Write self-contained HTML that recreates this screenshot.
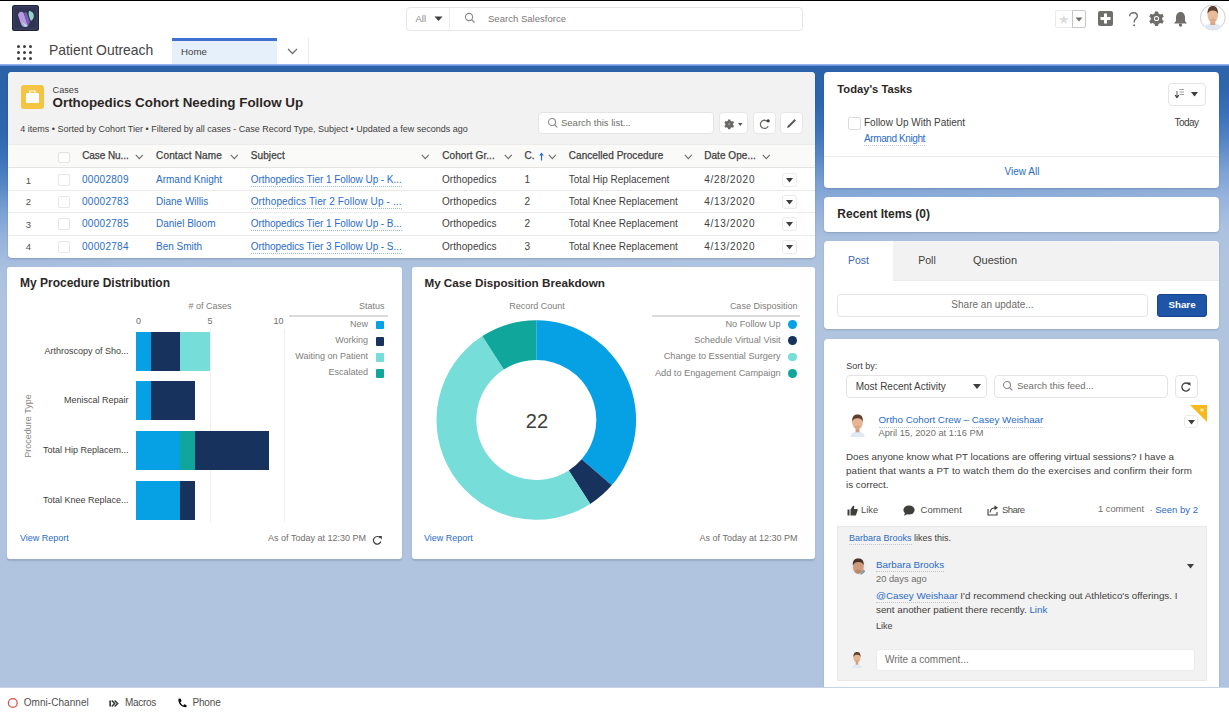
<!DOCTYPE html>
<html><head><meta charset="utf-8"><title>Salesforce</title>
<style>
*{box-sizing:border-box;margin:0;padding:0}
html,body{width:1229px;height:715px;overflow:hidden}
body{position:relative;font-family:"Liberation Sans",sans-serif;background:#b0c4df;color:#3e3e3c}
.a{position:absolute}
.t{position:absolute;white-space:nowrap}
svg.a{overflow:visible}
</style></head><body>
<div class="a" style="left:0px;top:65px;width:1229px;height:622px;background:linear-gradient(178deg,#2b62a8 21px,#2e66ad 66px,#3a70b8 91px,#5284c4 116px,#7aa0d3 146px,#98b4dc 176px,#abc1df 206px,#b0c4df 236px,#b0c4df 100%);"></div>
<div class="a" style="left:0px;top:0px;width:1229px;height:37px;background:#fff;"></div>
<div class="a" style="left:0px;top:0px;width:1229px;height:1px;background:#000;"></div>
<div class="a" style="left:0px;top:36.5px;width:1229px;height:1px;background:#f0efee;"></div>
<svg class="a" style="left:12px;top:5px;" width="27" height="26" viewBox="0 0 27 26"><rect x="0" y="0" width="27" height="26" rx="2.5" fill="#1f2339"/><rect x="1.8" y="1.8" width="23.4" height="22.4" rx="1" fill="#2f3453" stroke="#4b5276" stroke-width="0.8"/><path d="M6 10 C7 6 11 6 12 9 L16 21 C13 23 10 22 9 19 Z" fill="#b79be0"/><path d="M10 17 L16 21 L13 22 Z" fill="#a8e0e0"/><path d="M12 8 C14 7 15 8 15 9 L18 17 L16 21 Z" fill="#7d5cb8"/><path d="M17 6 C21 6 23 10 21 14 L19 16 C17 12 16 9 17 6 Z" fill="#8fd8c8"/></svg>
<div class="a" style="left:406px;top:7px;width:397px;height:23.5px;border:1px solid #e8e7e6;border-radius:4px;background:#fff;"></div>
<div class="a" style="left:449px;top:8px;width:1px;height:21px;background:#ecebea;"></div>
<div class="t" id="t0" style="left:415.5px;top:13.96px;font-size:9.5px;line-height:9.5px;color:#8a8886;font-weight:400;">All</div>
<svg class="a" style="left:434px;top:16px;" width="9" height="6" viewBox="0 0 9 6"><path d="M0.5 0.5 L8.5 0.5 L4.5 5 Z" fill="#3e3e3c"/></svg>
<svg class="a" style="left:464px;top:12px;" width="12" height="12" viewBox="0 0 12 12"><circle cx="5" cy="5" r="3.6" fill="none" stroke="#8a8886" stroke-width="1.1"/><path d="M7.6 7.6 L10.5 10.5" stroke="#8a8886" stroke-width="1.2"/></svg>
<div class="t" id="t1" style="left:488px;top:13.96px;font-size:9.5px;line-height:9.5px;color:#7a7876;font-weight:400;letter-spacing:0.022px;">Search Salesforce</div>
<div class="a" style="left:1055px;top:10px;width:18px;height:18px;border:1px solid #ecebea;border-radius:2px 0 0 2px;background:#fff;"></div>
<div class="t" id="t2" style="left:1064px;transform:translateX(-50%);top:13.00px;font-size:13px;line-height:13px;color:#dddbda;font-weight:400;">&#9733;</div>
<div class="a" style="left:1072px;top:10px;width:14px;height:18px;border:1px solid #c9c7c5;border-radius:0 2px 2px 0;background:#fff;"></div>
<svg class="a" style="left:1075px;top:17px;" width="8" height="5" viewBox="0 0 8 5"><path d="M0.5 0.5 L7.5 0.5 L4 4.5 Z" fill="#706e6b"/></svg>
<svg class="a" style="left:1098px;top:11px;" width="15" height="15" viewBox="0 0 15 15"><rect x="0" y="0" width="15" height="15" rx="2" fill="#706e6b"/><rect x="6" y="2.5" width="3" height="10" fill="#fff"/><rect x="2.5" y="6" width="10" height="3" fill="#fff"/></svg>
<svg class="a" style="left:1128px;top:12px;" width="11" height="15" viewBox="0 0 11 15"><path d="M1.6 4.2 C1.6 2 3.4 0.8 5.4 0.8 C7.6 0.8 9.3 2.2 9.3 4.2 C9.3 6.6 6.2 7 6.2 9.6 V10.6" fill="none" stroke="#706e6b" stroke-width="1.4"/><circle cx="6.2" cy="13.2" r="1" fill="#706e6b"/></svg>
<svg class="a" style="left:1149px;top:11px;" width="15" height="15" viewBox="0 0 15 15"><g transform="translate(7.5 7.5)"><path d="M-1.5 -7 h3 l0.5 2 l1.8 1 l2 -0.7 l1.5 2.6 l-1.6 1.4 v2 l1.6 1.4 l-1.5 2.6 l-2 -0.7 l-1.8 1 l-0.5 2 h-3 l-0.5 -2 l-1.8 -1 l-2 0.7 l-1.5 -2.6 l1.6 -1.4 v-2 l-1.6 -1.4 l1.5 -2.6 l2 0.7 l1.8 -1 Z" fill="#706e6b"/><circle r="2.6" fill="#fff"/><circle r="1.6" fill="#706e6b"/></g></svg>
<svg class="a" style="left:1173px;top:11px;" width="15" height="16" viewBox="0 0 15 16"><path d="M7.5 1 C10.5 1 12 3.5 12 6.5 L12 10 L14 12.5 L1 12.5 L3 10 L3 6.5 C3 3.5 4.5 1 7.5 1 Z" fill="#706e6b"/><circle cx="7.5" cy="14" r="1.7" fill="#706e6b"/></svg>
<svg class="a" style="left:1199px;top:4px;" width="27" height="27" viewBox="0 0 27 27"><defs><clipPath id="av"><circle cx="13.8" cy="13.5" r="12.3"/></clipPath></defs><circle cx="13.8" cy="13.5" r="12.4" fill="#fdfdfd" stroke="#cfcfcf" stroke-width="1"/><g clip-path="url(#av)"><path d="M3 28 C4 21 8 20 13.8 20 C19.5 20 23.5 21 24.5 28 Z" fill="#dfe8f2"/><rect x="11.3" y="16" width="5" height="5" fill="#d9a488"/><ellipse cx="13.8" cy="11.5" rx="5.2" ry="7" fill="#e9bb98"/><path d="M8.6 10 C8.2 4.5 10.8 2 13.8 2 C17 2 19.4 4.5 19 10 C18 7.5 16 6.5 13.8 6.6 C11.5 6.6 9.6 7.5 8.6 10 Z" fill="#5e3f2c"/><ellipse cx="13.8" cy="16" rx="3" ry="1.5" fill="#cf9a7c" opacity=".5"/></g></svg>
<div class="a" style="left:0px;top:37px;width:1229px;height:27px;background:#fff;"></div>
<div class="a" style="left:16.5px;top:44.5px;width:3.4px;height:3.4px;background:#3e3e3c;border-radius:50%;"></div>
<div class="a" style="left:16.5px;top:50.5px;width:3.4px;height:3.4px;background:#3e3e3c;border-radius:50%;"></div>
<div class="a" style="left:16.5px;top:56.5px;width:3.4px;height:3.4px;background:#3e3e3c;border-radius:50%;"></div>
<div class="a" style="left:22.5px;top:44.5px;width:3.4px;height:3.4px;background:#3e3e3c;border-radius:50%;"></div>
<div class="a" style="left:22.5px;top:50.5px;width:3.4px;height:3.4px;background:#3e3e3c;border-radius:50%;"></div>
<div class="a" style="left:22.5px;top:56.5px;width:3.4px;height:3.4px;background:#3e3e3c;border-radius:50%;"></div>
<div class="a" style="left:28.5px;top:44.5px;width:3.4px;height:3.4px;background:#3e3e3c;border-radius:50%;"></div>
<div class="a" style="left:28.5px;top:50.5px;width:3.4px;height:3.4px;background:#3e3e3c;border-radius:50%;"></div>
<div class="a" style="left:28.5px;top:56.5px;width:3.4px;height:3.4px;background:#3e3e3c;border-radius:50%;"></div>
<div class="t" id="t3" style="left:49px;top:43.53px;font-size:13.9px;line-height:13.9px;color:#444;font-weight:400;">Patient Outreach</div>
<div class="a" style="left:171.5px;top:38px;width:105.5px;height:26px;background:#e6f0fb;"></div>
<div class="a" style="left:171.5px;top:38px;width:105.5px;height:2.5px;background:#3f6fcf;"></div>
<div class="t" id="t4" style="left:181px;top:46.79px;font-size:9.7px;line-height:9.7px;color:#3e3e3c;font-weight:400;">Home</div>
<svg class="a" style="left:287px;top:48px;" width="11" height="7" viewBox="0 0 11 7"><path d="M1 1 L5.5 5.5 L10 1" fill="none" stroke="#706e6b" stroke-width="1.3"/></svg>
<div class="a" style="left:308px;top:38px;width:1px;height:26px;background:#ecebea;"></div>
<div class="a" style="left:0px;top:63.6px;width:1229px;height:2px;background:linear-gradient(to bottom,#a9c2f6,#5282d6);"></div>
<div class="a" style="left:7.5px;top:72px;width:807.5px;height:186px;background:#fff;border-radius:4px;box-shadow:0 1px 2px rgba(0,0,0,.18);overflow:hidden;"></div>
<div class="a" style="left:7.5px;top:72px;width:807.5px;height:72px;background:#f3f2f2;border-radius:4px 4px 0 0;"></div>
<svg class="a" style="left:21px;top:85px;" width="23" height="24" viewBox="0 0 23 24"><rect width="23" height="24" rx="3" fill="#f4c542"/><rect x="5" y="8" width="13" height="10" rx="1" fill="#fff"/><path d="M9 8 V6 H14 V8" fill="none" stroke="#fff" stroke-width="1.2"/></svg>
<div class="t" id="t5" style="left:52.5px;top:85.61px;font-size:9.2px;line-height:9.2px;color:#3e3e3c;font-weight:400;">Cases</div>
<div class="t" id="t6" style="left:52.5px;top:95.96px;font-size:13.4px;line-height:13.4px;color:#2b2826;font-weight:700;">Orthopedics Cohort Needing Follow Up</div>
<div class="t" id="t7" style="left:20.3px;top:124.58px;font-size:9px;line-height:9px;color:#3e3e3c;font-weight:400;">4 items • Sorted by Cohort Tier • Filtered by all cases - Case Record Type, Subject • Updated a few seconds ago</div>
<div class="a" style="left:538px;top:112px;width:176px;height:22px;background:#fff;border:1px solid #e5e4e3;border-radius:4px;"></div>
<svg class="a" style="left:547px;top:117px;" width="12" height="12" viewBox="0 0 12 12"><circle cx="5" cy="5" r="3.5" fill="none" stroke="#8a8886" stroke-width="1.1"/><path d="M7.6 7.6 L10.3 10.3" stroke="#8a8886" stroke-width="1.2"/></svg>
<div class="t" id="t8" style="left:561px;top:118.26px;font-size:9.5px;line-height:9.5px;color:#706e6b;font-weight:400;">Search this list...</div>
<div class="a" style="left:718.5px;top:112px;width:29.5px;height:21.5px;background:#fff;border:1px solid #e8e7e6;border-radius:4px;"></div>
<svg class="a" style="left:723.5px;top:118.5px;" width="11" height="11" viewBox="0 0 11 11"><g transform="translate(5.2 5.2) scale(0.85)"><path d="M-1.2 -5.5 h2.4 l0.4 1.5 l1.4 .8 l1.5 -.5 l1.2 2 l-1.2 1.1 v1.6 l1.2 1.1 l-1.2 2 l-1.5 -.5 l-1.4 .8 l-.4 1.5 h-2.4 l-.4 -1.5 l-1.4 -.8 l-1.5 .5 l-1.2 -2 l1.2 -1.1 v-1.6 l-1.2 -1.1 l1.2 -2 l1.5 .5 l1.4 -.8 Z" fill="#6b6967"/><circle r="1.3" fill="#9a9896"/></g></svg>
<svg class="a" style="left:738px;top:122.5px;" width="4.5" height="3" viewBox="0 0 4.5 3"><path d="M0 0 L4.5 0 L2.25 3 Z" fill="#555"/></svg>
<div class="a" style="left:753px;top:112px;width:22.5px;height:21.5px;background:#fff;border:1px solid #e8e7e6;border-radius:4px;"></div>
<svg class="a" style="left:758.5px;top:117.5px;" width="12" height="11" viewBox="0 0 12 11"><path d="M8.6 3.6 A4.1 4.1 0 1 0 9.2 8.2" fill="none" stroke="#6b6967" stroke-width="1.3"/><circle cx="9.2" cy="2.8" r="1.6" fill="#3e3e3c"/></svg>
<div class="a" style="left:779.5px;top:112px;width:23.5px;height:21.5px;background:#fff;border:1px solid #e8e7e6;border-radius:4px;"></div>
<svg class="a" style="left:785.5px;top:117.5px;" width="11" height="11" viewBox="0 0 11 11"><path d="M1 9.8 L1.6 8 L8.6 1 L10 2.4 L3 9.4 Z" fill="#5a5856"/></svg>
<div class="a" style="left:7.5px;top:144px;width:807.5px;height:24px;background:#fafaf9;border-top:1px solid #ecebea;border-bottom:1px solid #e5e4e3;"></div>
<div class="a" style="left:58.2px;top:151.5px;width:12px;height:11.5px;background:#fff;border:1px solid #e3e2e1;border-radius:2px;"></div>
<div class="t" id="t9" style="left:82.2px;top:151.44px;font-size:10px;line-height:10px;color:#3e3e3c;font-weight:400;-webkit-text-stroke:0.25px #3e3e3c;letter-spacing:-0.075px;">Case Nu...</div>
<svg class="a" style="left:135.2px;top:154.4px;" width="9" height="6" viewBox="0 0 9 6"><path d="M0.8 0.8 L4.3 4.6 L7.8 0.8" fill="none" stroke="#706e6b" stroke-width="1.1"/></svg>
<div class="t" id="t10" style="left:156px;top:151.44px;font-size:10px;line-height:10px;color:#3e3e3c;font-weight:400;-webkit-text-stroke:0.25px #3e3e3c;letter-spacing:0.173px;">Contact Name</div>
<svg class="a" style="left:229.5px;top:154.4px;" width="9" height="6" viewBox="0 0 9 6"><path d="M0.8 0.8 L4.3 4.6 L7.8 0.8" fill="none" stroke="#706e6b" stroke-width="1.1"/></svg>
<div class="t" id="t11" style="left:250.7px;top:151.44px;font-size:10px;line-height:10px;color:#3e3e3c;font-weight:400;-webkit-text-stroke:0.25px #3e3e3c;letter-spacing:0.120px;">Subject</div>
<svg class="a" style="left:420.5px;top:154.4px;" width="9" height="6" viewBox="0 0 9 6"><path d="M0.8 0.8 L4.3 4.6 L7.8 0.8" fill="none" stroke="#706e6b" stroke-width="1.1"/></svg>
<div class="t" id="t12" style="left:442.3px;top:151.44px;font-size:10px;line-height:10px;color:#3e3e3c;font-weight:400;-webkit-text-stroke:0.25px #3e3e3c;letter-spacing:0.068px;">Cohort Gr...</div>
<svg class="a" style="left:503.5px;top:154.4px;" width="9" height="6" viewBox="0 0 9 6"><path d="M0.8 0.8 L4.3 4.6 L7.8 0.8" fill="none" stroke="#706e6b" stroke-width="1.1"/></svg>
<div class="t" id="t13" style="left:524.6px;top:151.44px;font-size:10px;line-height:10px;color:#3e3e3c;font-weight:400;-webkit-text-stroke:0.25px #3e3e3c;">C.</div>
<svg class="a" style="left:538.5px;top:151.5px;" width="5" height="9" viewBox="0 0 5 9"><path d="M2.5 0.5 L4.8 3.5 L3.1 3.5 L3.1 8.5 L1.9 8.5 L1.9 3.5 L0.2 3.5 Z" fill="#2a6cc8"/></svg>
<svg class="a" style="left:547.8px;top:154.4px;" width="9" height="6" viewBox="0 0 9 6"><path d="M0.8 0.8 L4.3 4.6 L7.8 0.8" fill="none" stroke="#706e6b" stroke-width="1.1"/></svg>
<div class="t" id="t14" style="left:568.8px;top:151.44px;font-size:10px;line-height:10px;color:#3e3e3c;font-weight:400;-webkit-text-stroke:0.25px #3e3e3c;letter-spacing:0.058px;">Cancelled Procedure</div>
<svg class="a" style="left:683.5px;top:154.4px;" width="9" height="6" viewBox="0 0 9 6"><path d="M0.8 0.8 L4.3 4.6 L7.8 0.8" fill="none" stroke="#706e6b" stroke-width="1.1"/></svg>
<div class="t" id="t15" style="left:704.2px;top:151.44px;font-size:10px;line-height:10px;color:#3e3e3c;font-weight:400;-webkit-text-stroke:0.25px #3e3e3c;letter-spacing:0.051px;">Date Ope...</div>
<svg class="a" style="left:761.8px;top:154.4px;" width="9" height="6" viewBox="0 0 9 6"><path d="M0.8 0.8 L4.3 4.6 L7.8 0.8" fill="none" stroke="#706e6b" stroke-width="1.1"/></svg>
<div class="t" id="t16" style="left:28.5px;transform:translateX(-50%);top:175.66px;font-size:9.5px;line-height:9.5px;color:#514f4d;font-weight:400;">1</div>
<div class="a" style="left:58.2px;top:174.0px;width:12px;height:12px;background:#fff;border:1px solid #e9e8e7;border-radius:2px;"></div>
<div class="t" id="t17" style="left:82px;top:175.23px;font-size:10px;line-height:10px;color:#2a6cc8;font-weight:400;letter-spacing:0.287px;">00002809</div>
<div class="t" id="t18" style="left:156px;top:175.23px;font-size:10px;line-height:10px;color:#2a6cc8;font-weight:400;">Armand Knight</div>
<div class="t" id="t19" style="left:250.7px;top:175.23px;font-size:10px;line-height:10px;color:#2a6cc8;font-weight:400;border-bottom:1px dotted #9bb8e6;padding-bottom:1px;letter-spacing:-0.053px;">Orthopedics Tier 1 Follow Up - K...</div>
<div class="t" id="t20" style="left:442px;top:175.23px;font-size:10px;line-height:10px;color:#3e3e3c;font-weight:400;letter-spacing:0.062px;">Orthopedics</div>
<div class="t" id="t21" style="left:524.6px;top:175.23px;font-size:10px;line-height:10px;color:#3e3e3c;font-weight:400;">1</div>
<div class="t" id="t22" style="left:568.8px;top:175.23px;font-size:10px;line-height:10px;color:#3e3e3c;font-weight:400;">Total Hip Replacement</div>
<div class="t" id="t23" style="left:704.2px;top:175.23px;font-size:10px;line-height:10px;color:#3e3e3c;font-weight:400;letter-spacing:0.722px;">4/28/2020</div>
<div class="a" style="left:782px;top:173.0px;width:15px;height:14px;background:#fff;border:1px solid #ecebea;border-radius:3px;"></div>
<svg class="a" style="left:786px;top:178.0px;" width="7" height="5" viewBox="0 0 7 5"><path d="M0 0 L7 0 L3.5 4.5 Z" fill="#3e3e3c"/></svg>
<div class="a" style="left:7.5px;top:189.8px;width:807.5px;height:1px;background:#ecebea;"></div>
<div class="t" id="t24" style="left:28.5px;transform:translateX(-50%);top:197.46px;font-size:9.5px;line-height:9.5px;color:#514f4d;font-weight:400;">2</div>
<div class="a" style="left:58.2px;top:195.8px;width:12px;height:12px;background:#fff;border:1px solid #e9e8e7;border-radius:2px;"></div>
<div class="t" id="t25" style="left:82px;top:197.03px;font-size:10px;line-height:10px;color:#2a6cc8;font-weight:400;letter-spacing:0.287px;">00002783</div>
<div class="t" id="t26" style="left:156px;top:197.03px;font-size:10px;line-height:10px;color:#2a6cc8;font-weight:400;">Diane Willis</div>
<div class="t" id="t27" style="left:250.7px;top:197.03px;font-size:10px;line-height:10px;color:#2a6cc8;font-weight:400;border-bottom:1px dotted #9bb8e6;padding-bottom:1px;letter-spacing:0.142px;">Orthopedics Tier 2 Follow Up - ...</div>
<div class="t" id="t28" style="left:442px;top:197.03px;font-size:10px;line-height:10px;color:#3e3e3c;font-weight:400;letter-spacing:0.062px;">Orthopedics</div>
<div class="t" id="t29" style="left:524.6px;top:197.03px;font-size:10px;line-height:10px;color:#3e3e3c;font-weight:400;">2</div>
<div class="t" id="t30" style="left:568.8px;top:197.03px;font-size:10px;line-height:10px;color:#3e3e3c;font-weight:400;">Total Knee Replacement</div>
<div class="t" id="t31" style="left:704.2px;top:197.03px;font-size:10px;line-height:10px;color:#3e3e3c;font-weight:400;letter-spacing:0.722px;">4/13/2020</div>
<div class="a" style="left:782px;top:194.8px;width:15px;height:14px;background:#fff;border:1px solid #ecebea;border-radius:3px;"></div>
<svg class="a" style="left:786px;top:199.8px;" width="7" height="5" viewBox="0 0 7 5"><path d="M0 0 L7 0 L3.5 4.5 Z" fill="#3e3e3c"/></svg>
<div class="a" style="left:7.5px;top:212.1px;width:807.5px;height:1px;background:#ecebea;"></div>
<div class="t" id="t32" style="left:28.5px;transform:translateX(-50%);top:219.76px;font-size:9.5px;line-height:9.5px;color:#514f4d;font-weight:400;">3</div>
<div class="a" style="left:58.2px;top:218.1px;width:12px;height:12px;background:#fff;border:1px solid #e9e8e7;border-radius:2px;"></div>
<div class="t" id="t33" style="left:82px;top:219.33px;font-size:10px;line-height:10px;color:#2a6cc8;font-weight:400;letter-spacing:0.287px;">00002785</div>
<div class="t" id="t34" style="left:156px;top:219.33px;font-size:10px;line-height:10px;color:#2a6cc8;font-weight:400;">Daniel Bloom</div>
<div class="t" id="t35" style="left:250.7px;top:219.33px;font-size:10px;line-height:10px;color:#2a6cc8;font-weight:400;border-bottom:1px dotted #9bb8e6;padding-bottom:1px;letter-spacing:-0.053px;">Orthopedics Tier 1 Follow Up - B...</div>
<div class="t" id="t36" style="left:442px;top:219.33px;font-size:10px;line-height:10px;color:#3e3e3c;font-weight:400;letter-spacing:0.062px;">Orthopedics</div>
<div class="t" id="t37" style="left:524.6px;top:219.33px;font-size:10px;line-height:10px;color:#3e3e3c;font-weight:400;">2</div>
<div class="t" id="t38" style="left:568.8px;top:219.33px;font-size:10px;line-height:10px;color:#3e3e3c;font-weight:400;">Total Knee Replacement</div>
<div class="t" id="t39" style="left:704.2px;top:219.33px;font-size:10px;line-height:10px;color:#3e3e3c;font-weight:400;letter-spacing:0.722px;">4/13/2020</div>
<div class="a" style="left:782px;top:217.1px;width:15px;height:14px;background:#fff;border:1px solid #ecebea;border-radius:3px;"></div>
<svg class="a" style="left:786px;top:222.1px;" width="7" height="5" viewBox="0 0 7 5"><path d="M0 0 L7 0 L3.5 4.5 Z" fill="#3e3e3c"/></svg>
<div class="a" style="left:7.5px;top:234.5px;width:807.5px;height:1px;background:#ecebea;"></div>
<div class="t" id="t40" style="left:28.5px;transform:translateX(-50%);top:242.16px;font-size:9.5px;line-height:9.5px;color:#514f4d;font-weight:400;">4</div>
<div class="a" style="left:58.2px;top:240.5px;width:12px;height:12px;background:#fff;border:1px solid #e9e8e7;border-radius:2px;"></div>
<div class="t" id="t41" style="left:82px;top:241.73px;font-size:10px;line-height:10px;color:#2a6cc8;font-weight:400;letter-spacing:0.287px;">00002784</div>
<div class="t" id="t42" style="left:156px;top:241.73px;font-size:10px;line-height:10px;color:#2a6cc8;font-weight:400;">Ben Smith</div>
<div class="t" id="t43" style="left:250.7px;top:241.73px;font-size:10px;line-height:10px;color:#2a6cc8;font-weight:400;border-bottom:1px dotted #9bb8e6;padding-bottom:1px;letter-spacing:-0.053px;">Orthopedics Tier 3 Follow Up - S...</div>
<div class="t" id="t44" style="left:442px;top:241.73px;font-size:10px;line-height:10px;color:#3e3e3c;font-weight:400;letter-spacing:0.062px;">Orthopedics</div>
<div class="t" id="t45" style="left:524.6px;top:241.73px;font-size:10px;line-height:10px;color:#3e3e3c;font-weight:400;">3</div>
<div class="t" id="t46" style="left:568.8px;top:241.73px;font-size:10px;line-height:10px;color:#3e3e3c;font-weight:400;">Total Knee Replacement</div>
<div class="t" id="t47" style="left:704.2px;top:241.73px;font-size:10px;line-height:10px;color:#3e3e3c;font-weight:400;letter-spacing:0.722px;">4/13/2020</div>
<div class="a" style="left:782px;top:239.5px;width:15px;height:14px;background:#fff;border:1px solid #ecebea;border-radius:3px;"></div>
<svg class="a" style="left:786px;top:244.5px;" width="7" height="5" viewBox="0 0 7 5"><path d="M0 0 L7 0 L3.5 4.5 Z" fill="#3e3e3c"/></svg>
<div class="a" style="left:7.2px;top:267px;width:394.8px;height:291.8px;background:#fff;border-radius:3px;box-shadow:0 1.5px 1.5px rgba(40,60,90,.18);"></div>
<div class="t" id="t48" style="left:20px;top:276.64px;font-size:12px;line-height:12px;color:#2b2826;font-weight:700;">My Procedure Distribution</div>
<div class="t" id="t49" style="left:210px;transform:translateX(-50%);top:302.38px;font-size:9px;line-height:9px;color:#807e7c;font-weight:400;"># of Cases</div>
<div class="t" id="t50" style="left:138.6px;transform:translateX(-50%);top:317.38px;font-size:9px;line-height:9px;color:#706e6b;font-weight:400;">0</div>
<div class="t" id="t51" style="left:210.1px;transform:translateX(-50%);top:317.38px;font-size:9px;line-height:9px;color:#706e6b;font-weight:400;">5</div>
<div class="t" id="t52" style="right:945.4px;top:317.38px;font-size:9px;line-height:9px;color:#706e6b;font-weight:400;">10</div>
<div class="a" style="left:209.9px;top:329px;width:1px;height:193px;background:#efefef;"></div>
<div class="a" style="left:283.5px;top:329px;width:1px;height:193px;background:#efefef;"></div>
<div class="a" style="left:136.25px;top:331.5px;width:14.99px;height:39px;background:#06a0e4;"></div>
<div class="a" style="left:150.94px;top:331.5px;width:29.68px;height:39px;background:#18325e;"></div>
<div class="a" style="left:180.32px;top:331.5px;width:29.68px;height:39px;background:#76ddd8;"></div>
<div class="a" style="left:136.25px;top:381.2px;width:14.99px;height:39px;background:#06a0e4;"></div>
<div class="a" style="left:150.94px;top:381.2px;width:44.37px;height:39px;background:#18325e;"></div>
<div class="a" style="left:136.25px;top:431px;width:44.37px;height:39px;background:#06a0e4;"></div>
<div class="a" style="left:180.32px;top:431px;width:14.99px;height:39px;background:#11a69b;"></div>
<div class="a" style="left:195.01px;top:431px;width:73.75px;height:39px;background:#18325e;"></div>
<div class="a" style="left:136.25px;top:480.8px;width:44.37px;height:39px;background:#06a0e4;"></div>
<div class="a" style="left:180.32px;top:480.8px;width:14.99px;height:39px;background:#18325e;"></div>
<div class="t" id="t53" style="right:1100.5px;top:346.68px;font-size:9px;line-height:9px;color:#3e3e3c;font-weight:400;">Arthroscopy of Sho...</div>
<div class="t" id="t54" style="right:1100.5px;top:396.38px;font-size:9px;line-height:9px;color:#3e3e3c;font-weight:400;">Meniscal Repair</div>
<div class="t" id="t55" style="right:1100.5px;top:446.18px;font-size:9px;line-height:9px;color:#3e3e3c;font-weight:400;">Total Hip Replacem...</div>
<div class="t" id="t56" style="right:1100.5px;top:495.88px;font-size:9px;line-height:9px;color:#3e3e3c;font-weight:400;">Total Knee Replace...</div>
<div class="t" id="t57" style="left:28px;top:418.38px;font-size:9px;line-height:9px;color:#8a8886;font-weight:400;transform:translate(-50%,-50%) rotate(-90deg);transform-origin:50% 50%;margin-top:7.6px;">Procedure Type</div>
<div class="t" id="t58" style="right:844.5px;top:301.88px;font-size:9px;line-height:9px;color:#807e7c;font-weight:400;">Status</div>
<div class="a" style="left:288.7px;top:315px;width:99px;height:1.5px;background:#dddbda;"></div>
<div class="t" id="t59" style="right:861px;top:319.78px;font-size:9px;line-height:9px;color:#807e7c;font-weight:400;">New</div>
<div class="a" style="left:375.5px;top:320.59999999999997px;width:8.5px;height:8.5px;background:#06a0e4;border-radius:1px;"></div>
<div class="t" id="t60" style="right:861px;top:336.18px;font-size:9px;line-height:9px;color:#807e7c;font-weight:400;">Working</div>
<div class="a" style="left:375.5px;top:337.0px;width:8.5px;height:8.5px;background:#18325e;border-radius:1px;"></div>
<div class="t" id="t61" style="right:861px;top:352.38px;font-size:9px;line-height:9px;color:#807e7c;font-weight:400;">Waiting on Patient</div>
<div class="a" style="left:375.5px;top:353.2px;width:8.5px;height:8.5px;background:#76ddd8;border-radius:1px;"></div>
<div class="t" id="t62" style="right:861px;top:368.38px;font-size:9px;line-height:9px;color:#807e7c;font-weight:400;">Escalated</div>
<div class="a" style="left:375.5px;top:369.2px;width:8.5px;height:8.5px;background:#11a69b;border-radius:1px;"></div>
<div class="t" id="t63" style="left:20px;top:533.78px;font-size:9px;line-height:9px;color:#2a6cc8;font-weight:400;">View Report</div>
<div class="t" id="t64" style="right:863px;top:533.88px;font-size:9px;line-height:9px;color:#706e6b;font-weight:400;">As of Today at 12:30 PM</div>
<svg class="a" style="left:372px;top:535px;" width="11" height="10" viewBox="0 0 11 10"><path d="M8.2 3 A3.8 3.8 0 1 0 8.8 6.5" fill="none" stroke="#3e3e3c" stroke-width="1.2"/><path d="M6.3 1 L9.8 1 L9.8 4.5 Z" fill="#3e3e3c"/></svg>
<div class="a" style="left:412px;top:267px;width:403px;height:291.8px;background:#fff;border-radius:3px;box-shadow:0 1.5px 1.5px rgba(40,60,90,.18);"></div>
<div class="t" id="t65" style="left:424.4px;top:277.30px;font-size:11.7px;line-height:11.7px;color:#2b2826;font-weight:700;">My Case Disposition Breakdown</div>
<div class="t" id="t66" style="left:537px;transform:translateX(-50%);top:302.08px;font-size:9px;line-height:9px;color:#807e7c;font-weight:400;">Record Count</div>
<svg class="a" style="left:412px;top:300px;" width="250" height="240" viewBox="0 0 250 240"><path d="M124.30 20.20 A99.8 99.8 0 0 1 199.72 185.36 L169.64 159.29 A60 60 0 0 0 124.30 60.00 Z" fill="#06a0e4"/><path d="M199.72 185.36 A99.8 99.8 0 0 1 178.26 203.96 L156.74 170.48 A60 60 0 0 0 169.64 159.29 Z" fill="#18325e"/><path d="M178.26 203.96 A99.8 99.8 0 0 1 70.34 36.04 L91.86 69.52 A60 60 0 0 0 156.74 170.48 Z" fill="#76ddd8"/><path d="M70.34 36.04 A99.8 99.8 0 0 1 124.30 20.20 L124.30 60.00 A60 60 0 0 0 91.86 69.52 Z" fill="#11a69b"/></svg>
<div class="t" id="t67" style="left:537px;transform:translateX(-50%);top:410.67px;font-size:20px;line-height:20px;color:#3e3e3c;font-weight:400;letter-spacing:0.125px;">22</div>
<div class="t" id="t68" style="right:431.6px;top:301.68px;font-size:9px;line-height:9px;color:#807e7c;font-weight:400;">Case Disposition</div>
<div class="a" style="left:651.7px;top:315.3px;width:148.6px;height:1.5px;background:#dddbda;"></div>
<div class="t" id="t69" style="right:448.4px;top:320.11px;font-size:9.2px;line-height:9.2px;color:#807e7c;font-weight:400;">No Follow Up</div>
<div class="a" style="left:788.3px;top:320.3px;width:8.8px;height:8.8px;background:#06a0e4;border-radius:50%;"></div>
<div class="t" id="t70" style="right:448.4px;top:336.21px;font-size:9.2px;line-height:9.2px;color:#807e7c;font-weight:400;">Schedule Virtual Visit</div>
<div class="a" style="left:788.3px;top:336.40000000000003px;width:8.8px;height:8.8px;background:#18325e;border-radius:50%;"></div>
<div class="t" id="t71" style="right:448.4px;top:352.41px;font-size:9.2px;line-height:9.2px;color:#807e7c;font-weight:400;">Change to Essential Surgery</div>
<div class="a" style="left:788.3px;top:352.6px;width:8.8px;height:8.8px;background:#76ddd8;border-radius:50%;"></div>
<div class="t" id="t72" style="right:448.4px;top:368.61px;font-size:9.2px;line-height:9.2px;color:#807e7c;font-weight:400;">Add to Engagement Campaign</div>
<div class="a" style="left:788.3px;top:368.8px;width:8.8px;height:8.8px;background:#11a69b;border-radius:50%;"></div>
<div class="t" id="t73" style="left:424px;top:533.78px;font-size:9px;line-height:9px;color:#2a6cc8;font-weight:400;">View Report</div>
<div class="t" id="t74" style="right:431.5px;top:533.88px;font-size:9px;line-height:9px;color:#706e6b;font-weight:400;">As of Today at 12:30 PM</div>
<div class="a" style="left:824.3px;top:72px;width:395px;height:116px;background:#fff;border-radius:4px;box-shadow:0 1px 2px rgba(0,0,0,.15);"></div>
<div class="t" id="t75" style="left:837.3px;top:83.82px;font-size:11.2px;line-height:11.2px;color:#2b2826;font-weight:700;">Today&#39;s Tasks</div>
<div class="a" style="left:1168px;top:82.5px;width:38px;height:23px;background:#fff;border:1px solid #e5e4e3;border-radius:4px;"></div>
<svg class="a" style="left:1174px;top:87px;" width="12" height="12" viewBox="0 0 12 12"><path d="M3 4 V10" stroke="#6b6967" stroke-width="1.1"/><path d="M1.2 8.2 L3 10.5 L4.8 8.2" fill="none" stroke="#3e3e3c" stroke-width="1.3"/><path d="M5.5 2.5 H10 M5.5 5 H10 M5.5 7.5 H10" stroke="#a3a1a0" stroke-width="1.2"/></svg>
<svg class="a" style="left:1191px;top:92px;" width="7" height="5" viewBox="0 0 7 5"><path d="M0 0 L7 0 L3.5 4.5 Z" fill="#3e3e3c"/></svg>
<div class="a" style="left:848px;top:117px;width:12.5px;height:12.5px;background:#fff;border:1px solid #dddbda;border-radius:2px;"></div>
<div class="t" id="t76" style="left:864px;top:118.13px;font-size:10px;line-height:10px;color:#3e3e3c;font-weight:400;">Follow Up With Patient</div>
<div class="t" id="t77" style="right:30.5px;top:118.13px;font-size:10px;line-height:10px;color:#3e3e3c;font-weight:400;letter-spacing:-0.537px;">Today</div>
<div class="t" id="t78" style="left:864px;top:133.53px;font-size:10px;line-height:10px;color:#2a6cc8;font-weight:400;border-bottom:1px dotted #c5cbd3;padding-bottom:1px;letter-spacing:-0.397px;">Armand Knight</div>
<div class="a" style="left:824.3px;top:155.5px;width:395px;height:1px;background:#ecebea;"></div>
<div class="t" id="t79" style="left:1022px;transform:translateX(-50%);top:166.53px;font-size:10px;line-height:10px;color:#2a6cc8;font-weight:400;">View All</div>
<div class="a" style="left:824.3px;top:197.3px;width:395px;height:34.3px;background:#fff;border-radius:4px;box-shadow:0 1px 2px rgba(0,0,0,.15);"></div>
<div class="t" id="t80" style="left:837.3px;top:208.14px;font-size:12px;line-height:12px;color:#2b2826;font-weight:700;">Recent Items (0)</div>
<div class="a" style="left:824.3px;top:240.6px;width:395px;height:88.5px;background:#fff;border-radius:4px;box-shadow:0 1px 2px rgba(0,0,0,.15);overflow:hidden;"></div>
<div class="a" style="left:892.5px;top:240.6px;width:326.8px;height:40px;background:#f3f2f2;border-bottom:1px solid #ecebea;border-radius:0 4px 0 0;"></div>
<div class="t" id="t81" style="left:858.5px;transform:translateX(-50%);top:255.11px;font-size:10.5px;line-height:10.5px;color:#3a66b5;font-weight:400;">Post</div>
<div class="t" id="t82" style="left:927px;transform:translateX(-50%);top:255.11px;font-size:10.5px;line-height:10.5px;color:#3e3e3c;font-weight:400;">Poll</div>
<div class="t" id="t83" style="left:995px;transform:translateX(-50%);top:254.69px;font-size:11px;line-height:11px;color:#3e3e3c;font-weight:400;">Question</div>
<div class="a" style="left:837.3px;top:294px;width:311px;height:22.5px;background:#fff;border:1px solid #e5e4e3;border-radius:4px;"></div>
<div class="t" id="t84" style="left:992.5px;transform:translateX(-50%);top:300.04px;font-size:10px;line-height:10px;color:#706e6b;font-weight:400;">Share an update...</div>
<div class="a" style="left:1157px;top:294px;width:50px;height:22.5px;background:#1f55a6;border:1px solid #17458f;border-radius:3px;"></div>
<div class="t" id="t85" style="left:1182px;transform:translateX(-50%);top:300.30px;font-size:9.8px;line-height:9.8px;color:#fff;font-weight:700;">Share</div>
<div class="a" style="left:824.3px;top:339px;width:395px;height:348px;background:#fff;border-radius:4px 4px 0 0;box-shadow:0 1px 2px rgba(0,0,0,.15);"></div>
<div class="t" id="t86" style="left:846.3px;top:362.38px;font-size:9px;line-height:9px;color:#3e3e3c;font-weight:400;">Sort by:</div>
<div class="a" style="left:846.3px;top:375px;width:141px;height:22.5px;background:#fff;border:1px solid #e5e4e3;border-radius:4px;"></div>
<div class="t" id="t87" style="left:855.7px;top:381.54px;font-size:10px;line-height:10px;color:#3e3e3c;font-weight:400;">Most Recent Activity</div>
<svg class="a" style="left:973px;top:383.5px;" width="8" height="5" viewBox="0 0 8 5"><path d="M0 0 L8 0 L4 5 Z" fill="#3e3e3c"/></svg>
<div class="a" style="left:993.5px;top:375px;width:174px;height:22.5px;background:#fff;border:1px solid #e5e4e3;border-radius:4px;"></div>
<svg class="a" style="left:1002px;top:380px;" width="12" height="12" viewBox="0 0 12 12"><circle cx="5" cy="5" r="3.5" fill="none" stroke="#8a8886" stroke-width="1.1"/><path d="M7.6 7.6 L10.3 10.3" stroke="#8a8886" stroke-width="1.2"/></svg>
<div class="t" id="t88" style="left:1017px;top:380.96px;font-size:9.5px;line-height:9.5px;color:#706e6b;font-weight:400;">Search this feed...</div>
<div class="a" style="left:1175px;top:375px;width:22.7px;height:22.5px;background:#fff;border:1px solid #e5e4e3;border-radius:4px;"></div>
<svg class="a" style="left:1180px;top:380.5px;" width="12" height="12" viewBox="0 0 12 12"><path d="M9 3.5 A4 4 0 1 0 9.6 7.5" fill="none" stroke="#3e3e3c" stroke-width="1.3"/><path d="M7 1.5 L10.5 1.5 L10.5 5 Z" fill="#3e3e3c"/></svg>
<svg class="a" style="left:850px;top:412.5px;" width="15" height="24" viewBox="0 0 15 24"><g transform="scale(1.0714285714285714 1.0434782608695652)"><path d="M0.5 23 C0.5 19.5 3 18 7 18 C11 18 13.5 19.5 13.5 23 Z" fill="#dfe9f3"/><rect x="5.2" y="13" width="3.6" height="5.5" fill="#d39c7e"/><ellipse cx="7" cy="9" rx="5" ry="6.6" fill="#e6b596"/><path d="M2 8.5 C1.8 3 4.2 1.5 7 1.5 C10 1.5 12.3 3 12 8.5 C11.2 5.8 9.2 5 7 5.1 C4.8 5.1 2.9 5.8 2 8.5 Z" fill="#5e3f2c"/><ellipse cx="7" cy="13.5" rx="2.8" ry="1.4" fill="#c98f70" opacity=".45"/></g></svg>
<div class="t" id="t89" style="left:878.5px;top:415.00px;font-size:9.8px;line-height:9.8px;color:#2a6cc8;font-weight:400;"><span style="border-bottom:1px dotted #c5cbd3;padding-bottom:1.5px">Ortho Cohort Crew</span> – <span style="border-bottom:1px dotted #c5cbd3;padding-bottom:1.5px">Casey Weishaar</span></div>
<div class="t" id="t90" style="left:878.5px;top:429.13px;font-size:9.3px;line-height:9.3px;color:#706e6b;font-weight:400;">April 15, 2020 at 1:16 PM</div>
<svg class="a" style="left:1190px;top:404.5px;" width="17" height="17" viewBox="0 0 17 17"><path d="M0 0 L17 0 L17 17 Z" fill="#f8b91e"/><circle cx="12" cy="5" r="1.8" fill="#fde7a8"/></svg>
<div class="a" style="left:1184px;top:415px;width:14px;height:13px;background:#fff;border:1px solid #ecebea;border-radius:3px;"></div>
<svg class="a" style="left:1187.5px;top:420px;" width="7" height="5" viewBox="0 0 7 5"><path d="M0 0 L7 0 L3.5 4.5 Z" fill="#3e3e3c"/></svg>
<div class="t" id="t91" style="left:846px;top:451.70px;font-size:9.8px;line-height:9.8px;color:#3e3e3c;font-weight:400;">Does anyone know what PT locations are offering virtual sessions? I have a</div>
<div class="t" id="t92" style="left:846px;top:466.10px;font-size:9.8px;line-height:9.8px;color:#3e3e3c;font-weight:400;letter-spacing:0.132px;">patient that wants a PT to watch them do the exercises and confirm their form</div>
<div class="t" id="t93" style="left:846px;top:479.50px;font-size:9.8px;line-height:9.8px;color:#3e3e3c;font-weight:400;">is correct.</div>
<svg class="a" style="left:847px;top:505px;" width="11" height="11" viewBox="0 0 11 11"><path d="M0.5 4.5 H2.5 V10.5 H0.5 Z" fill="#3e3e3c"/><path d="M3.5 4.5 L6 0.8 C7 0.5 7.5 1.3 7.2 2.5 L6.8 4 H9.8 C10.6 4 10.9 4.8 10.6 5.5 L9 10 C8.8 10.4 8.4 10.6 8 10.6 H3.5 Z" fill="#3e3e3c"/></svg>
<div class="t" id="t94" style="left:861px;top:505.93px;font-size:9.3px;line-height:9.3px;color:#514f4d;font-weight:400;">Like</div>
<svg class="a" style="left:902.5px;top:505px;" width="12" height="11" viewBox="0 0 12 11"><ellipse cx="6" cy="5" rx="5.6" ry="4.6" fill="#3e3e3c"/><path d="M2 8 L1 10.8 L4.5 9 Z" fill="#3e3e3c"/></svg>
<div class="t" id="t95" style="left:920.6px;top:505.26px;font-size:9.5px;line-height:9.5px;color:#514f4d;font-weight:400;">Comment</div>
<svg class="a" style="left:986.5px;top:504px;" width="12" height="12" viewBox="0 0 12 12"><path d="M1 5 V11 H10 V8" fill="none" stroke="#3e3e3c" stroke-width="1.1"/><path d="M3 8.5 C3.5 5 6 3.8 8.5 3.8" fill="none" stroke="#3e3e3c" stroke-width="1.1"/><path d="M7.5 1.3 L11 3.8 L7.5 6.3 Z" fill="#3e3e3c"/></svg>
<div class="t" id="t96" style="left:1002px;top:505.26px;font-size:9.5px;line-height:9.5px;color:#514f4d;font-weight:400;letter-spacing:-0.552px;">Share</div>
<div class="t" id="t97" style="right:85px;top:505.43px;font-size:9.3px;line-height:9.3px;color:#706e6b;font-weight:400;">1 comment</div>
<div class="t" id="t98" style="left:1151px;transform:translateX(-50%);top:505.68px;font-size:9px;line-height:9px;color:#706e6b;font-weight:400;">·</div>
<div class="t" id="t99" style="right:31px;top:505.26px;font-size:9.5px;line-height:9.5px;color:#2a6cc8;font-weight:400;">Seen by 2</div>
<div class="a" style="left:836.7px;top:525.6px;width:370.3px;height:155px;background:#f3f2f2;border:1px solid #e9e8e7;"></div>
<div class="t" id="t100" style="left:849px;top:533.88px;font-size:9px;line-height:9px;color:#3e3e3c;font-weight:400;"><span style="border-bottom:1px dotted #c0c6ce;padding-bottom:1px;color:#2a6cc8">Barbara Brooks</span> likes this.</div>
<svg class="a" style="left:849.5px;top:557.3px;" width="17" height="18.5" viewBox="0 0 17 18.5"><defs><clipPath id="cb"><ellipse cx="8.5" cy="9.2" rx="8.2" ry="9"/></clipPath></defs><g clip-path="url(#cb)"><rect width="17" height="19" fill="#e9eef0"/><path d="M12 12 C15 13 17 15 17 19 L10 19 Z" fill="#6fa4ad"/><ellipse cx="8.3" cy="9.8" rx="5.4" ry="7.2" fill="#cf9a7b"/><path d="M2.8 8.5 C2.6 3 5 1.5 8.3 1.5 C11.5 1.5 14 3 13.8 8.5 C13 5.8 10.8 4.8 8.3 4.9 C5.8 4.9 3.7 5.8 2.8 8.5 Z" fill="#4b3025"/><ellipse cx="8.3" cy="14.5" rx="3" ry="1.8" fill="#a8705a" opacity=".5"/></g></svg>
<div class="t" id="t101" style="left:876px;top:559.70px;font-size:9.8px;line-height:9.8px;color:#2a6cc8;font-weight:400;"><span style="border-bottom:1px dotted #c0c6ce;padding-bottom:1.5px">Barbara Brooks</span></div>
<svg class="a" style="left:1186.5px;top:563.5px;" width="7" height="5" viewBox="0 0 7 5"><path d="M0 0 L7 0 L3.5 4.5 Z" fill="#3e3e3c"/></svg>
<div class="t" id="t102" style="left:876px;top:574.63px;font-size:9.3px;line-height:9.3px;color:#706e6b;font-weight:400;">20 days ago</div>
<div class="t" id="t103" style="left:876px;top:591.00px;font-size:9.8px;line-height:9.8px;color:#3e3e3c;font-weight:400;"><span style="border-bottom:1px dotted #c0c6ce;padding-bottom:1px;color:#2a6cc8">@Casey Weishaar</span> I&#39;d recommend checking out Athletico&#39;s offerings. I</div>
<div class="t" id="t104" style="left:876px;top:605.10px;font-size:9.8px;line-height:9.8px;color:#3e3e3c;font-weight:400;">sent another patient there recently. <span style="color:#2a6cc8">Link</span></div>
<div class="t" id="t105" style="left:876px;top:621.88px;font-size:9px;line-height:9px;color:#3e3e3c;font-weight:400;">Like</div>
<svg class="a" style="left:852px;top:651px;" width="10" height="17" viewBox="0 0 10 17"><g transform="scale(0.7142857142857143 0.7391304347826086)"><path d="M0.5 23 C0.5 19.5 3 18 7 18 C11 18 13.5 19.5 13.5 23 Z" fill="#dfe9f3"/><rect x="5.2" y="13" width="3.6" height="5.5" fill="#d39c7e"/><ellipse cx="7" cy="9" rx="5" ry="6.6" fill="#e6b596"/><path d="M2 8.5 C1.8 3 4.2 1.5 7 1.5 C10 1.5 12.3 3 12 8.5 C11.2 5.8 9.2 5 7 5.1 C4.8 5.1 2.9 5.8 2 8.5 Z" fill="#5e3f2c"/><ellipse cx="7" cy="13.5" rx="2.8" ry="1.4" fill="#c98f70" opacity=".45"/></g></svg>
<div class="a" style="left:876px;top:649px;width:318.5px;height:22px;background:#fff;border:1px solid #ecebea;border-radius:3px;"></div>
<div class="t" id="t106" style="left:885px;top:654.53px;font-size:10px;line-height:10px;color:#706e6b;font-weight:400;">Write a comment...</div>
<div class="a" style="left:0px;top:686.7px;width:1229px;height:28.3px;background:#fff;border-top:1px solid #c9d3e6;"></div>
<svg class="a" style="left:7px;top:697px;" width="12" height="12" viewBox="0 0 12 12"><circle cx="5.8" cy="6" r="4.4" fill="none" stroke="#d4504c" stroke-width="1.3"/></svg>
<div class="t" id="t107" style="left:23.8px;top:698.03px;font-size:10px;line-height:10px;color:#514f4d;font-weight:400;letter-spacing:0.043px;">Omni-Channel</div>
<svg class="a" style="left:109px;top:699.5px;" width="10" height="7" viewBox="0 0 10 7"><path d="M0.3 0.5 H2 V6.5 H0.3 Z" fill="#3e3e3c"/><path d="M2.8 0.5 L5.6 3.5 L2.8 6.5 M5.6 0.5 L8.6 3.5 L5.6 6.5" fill="none" stroke="#3e3e3c" stroke-width="1.6"/></svg>
<div class="t" id="t108" style="left:125px;top:698.03px;font-size:10px;line-height:10px;color:#514f4d;font-weight:400;letter-spacing:-0.299px;">Macros</div>
<svg class="a" style="left:176.5px;top:698px;" width="10" height="10" viewBox="0 0 10 10"><path d="M1.5 0.8 L3.5 0.5 L4.6 3 L3.3 4.2 C4 5.8 5 6.8 6.2 7.4 L7.4 6.2 L9.6 7.2 L9.4 9.3 C4.5 9.6 0.8 5.5 1.5 0.8 Z" fill="#080707"/></svg>
<div class="t" id="t109" style="left:192.4px;top:698.03px;font-size:10px;line-height:10px;color:#514f4d;font-weight:400;letter-spacing:-0.124px;">Phone</div>
</body></html>
